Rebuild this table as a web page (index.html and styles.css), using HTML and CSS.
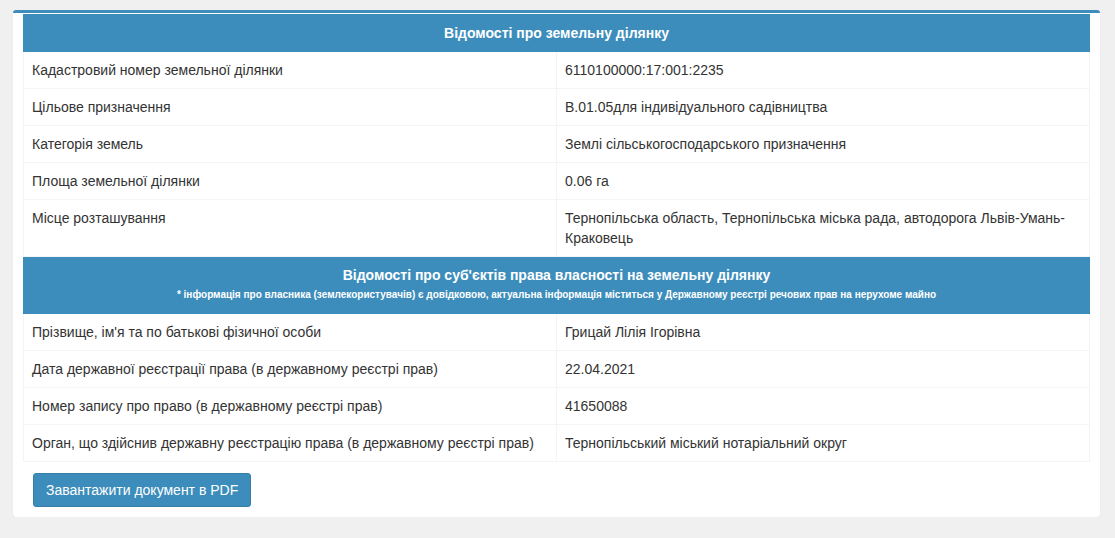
FILE: index.html
```html
<!DOCTYPE html>
<html lang="uk">
<head>
<meta charset="utf-8">
<title>Відомості про земельну ділянку</title>
<link rel="stylesheet" href="styles.css">
</head>
<body>
<div class="box">
  <table class="info">
    <colgroup><col class="c1"><col class="c2"></colgroup>
    <tr class="head"><th colspan="2">Відомості про земельну ділянку</th></tr>
    <tr><td>Кадастровий номер земельної ділянки</td><td>6110100000:17:001:2235</td></tr>
    <tr><td>Цільове призначення</td><td>В.01.05для індивідуального садівництва</td></tr>
    <tr><td>Категорія земель</td><td>Землі сільськогосподарського призначення</td></tr>
    <tr><td>Площа земельної ділянки</td><td>0.06 га</td></tr>
    <tr><td>Місце розташування</td><td>Тернопільська область, Тернопільська міська рада, автодорога Львів-Умань-Краковець</td></tr>
    <tr class="head"><th colspan="2">Відомості про суб'єктів права власності на земельну ділянку<span class="note">* інформація про власника (землекористувачів) є довідковою, актуальна інформація міститься у Державному реєстрі речових прав на нерухоме майно</span></th></tr>
    <tr><td>Прізвище, ім'я та по батькові фізичної особи</td><td>Грицай Лілія Ігорівна</td></tr>
    <tr><td>Дата державної реєстрації права (в державному реєстрі прав)</td><td>22.04.2021</td></tr>
    <tr><td>Номер запису про право (в державному реєстрі прав)</td><td>41650088</td></tr>
    <tr><td>Орган, що здійснив державну реєстрацію права (в державному реєстрі прав)</td><td>Тернопільський міський нотаріальний округ</td></tr>
  </table>
  <div class="actions">
    <button class="btn" type="button">Завантажити документ в PDF</button>
  </div>
</div>
</body>
</html>
```

FILE: styles.css
```css
html, body {
  margin: 0;
  padding: 0;
}
body {
  background: #f0f0f0;
  font-family: "Liberation Sans", Arial, sans-serif;
  font-size: 14px;
  line-height: 20px;
  color: #333;
  padding: 10px 15px 0 13px;
}
.box {
  width: 1087px;
  box-sizing: border-box;
  background: #fff;
  border-top: 3px solid #3c8dbc;
  border-radius: 3px;
  box-shadow: 0 1px 1px rgba(0,0,0,0.1);
  padding: 1px 10px 10px 10px;
}
.info {
  width: 100%;
  border-collapse: collapse;
  border: 1px solid #f4f4f4;
  table-layout: fixed;
}
.c1 { width: 533px; }
.info td {
  padding: 8px;
  border: 1px solid #f4f4f4;
  vertical-align: top;
  text-align: left;
}
.info th {
  background: #3c8dbc;
  color: #fff;
  font-weight: bold;
  text-align: center;
  padding: 8px;
  border: 1px solid #3c8dbc;
}
.note {
  display: block;
  font-size: 10px;
  line-height: 20px;
}
.actions {
  padding: 11px 10px 0;
}
.btn {
  display: inline-block;
  background: #3c8dbc;
  border: 1px solid #367fa9;
  border-radius: 3px;
  color: #fff;
  font-family: "Liberation Sans", Arial, sans-serif;
  font-size: 14px;
  line-height: 20px;
  padding: 6px 12px;
  cursor: pointer;
}
```
